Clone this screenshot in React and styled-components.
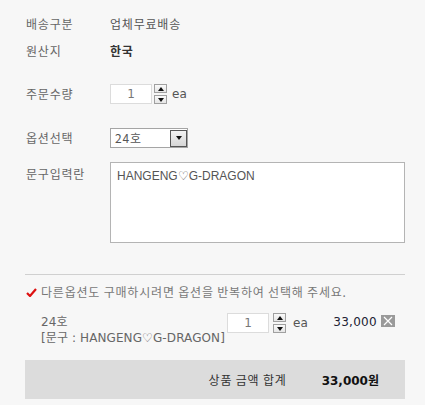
import styled, { createGlobalStyle } from "styled-components";

const GlobalStyle = createGlobalStyle`
  body {
    margin: 0;
    background: #f7f7f7;
    font-family: "Noto Sans CJK KR", "Noto Sans", sans-serif;
    font-size: 12px;
    letter-spacing: 0.8px;
    color: #666;
  }
`;

function QtyControl({ $gap = 2, $eaGap = 5 }) {
  return (
    <StyledQty>
      <StyledQtyInput readOnly value="1" />
      <StyledSpinner style={{ marginLeft: $gap }}>
        <StyledSpinButton aria-label="up">
          <StyledArrow $up />
        </StyledSpinButton>
        <StyledSpinButton aria-label="down">
          <StyledArrow />
        </StyledSpinButton>
      </StyledSpinner>
      <StyledUnit style={{ marginLeft: $eaGap }}>ea</StyledUnit>
    </StyledQty>
  );
}

function CheckIcon() {
  return (
    <StyledCheck width="11" height="9" viewBox="0 0 11 9">
      <path d="M1 5 L4 8 L10 1" fill="none" stroke="#d11" strokeWidth="2.2" />
    </StyledCheck>
  );
}

export default function App() {
  return (
    <>
      <GlobalStyle />
      <StyledPage>
        <StyledRow $height={27}>
          <StyledLabel>배송구분</StyledLabel>
          <StyledValue>업체무료배송</StyledValue>
        </StyledRow>
        <StyledRow $height={27}>
          <StyledLabel>원산지</StyledLabel>
          <StyledValue $bold>한국</StyledValue>
        </StyledRow>
        <StyledRow $top={20} $height={20}>
          <StyledLabel>주문수량</StyledLabel>
          <QtyControl />
        </StyledRow>
        <StyledRow $top={24} $height={20}>
          <StyledLabel>옵션선택</StyledLabel>
          <StyledSelect>
            <StyledSelectText>24호</StyledSelectText>
            <StyledSelectButton>
              <StyledArrow />
            </StyledSelectButton>
          </StyledSelect>
        </StyledRow>
        <StyledRow $top={14} $alignTop>
          <StyledLabel $pad>문구입력란</StyledLabel>
          <StyledTextArea readOnly value="HANGENG♡G-DRAGON" />
        </StyledRow>

        <StyledDivider />

        <StyledNotice>
          <CheckIcon />
          다른옵션도 구매하시려면 옵션을 반복하여 선택해 주세요.
        </StyledNotice>

        <StyledOptionRow>
          <StyledOptionName>
            24호
            <br />
            [문구 : HANGENG♡G-DRAGON]
          </StyledOptionName>
          <QtyControl $gap={4} $eaGap={7} />
          <StyledPrice>33,000</StyledPrice>
          <StyledRemove aria-label="remove">
            <svg width="10" height="10" viewBox="0 0 10 10">
              <path d="M1 1 L9 9 M9 1 L1 9" stroke="#fff" strokeWidth="1.2" />
            </svg>
          </StyledRemove>
        </StyledOptionRow>

        <StyledTotalBar>
          <StyledTotalLabel>상품 금액 합계</StyledTotalLabel>
          <StyledTotalValue>33,000원</StyledTotalValue>
        </StyledTotalBar>
      </StyledPage>
    </>
  );
}

const StyledPage = styled.main`
  width: 380px;
  padding: 10px 20px 6px 25px;
`;

const StyledRow = styled.div`
  display: flex;
  align-items: ${({ $alignTop }) => ($alignTop ? "flex-start" : "center")};
  margin-top: ${({ $top = 0 }) => $top}px;
  height: ${({ $height }) => ($height ? `${$height}px` : "auto")};
`;

const StyledLabel = styled.div`
  width: 84px;
  padding-left: 1px;
  padding-top: ${({ $pad }) => ($pad ? "3px" : "0")};
  line-height: 18px;
  color: #666;
`;

const StyledValue = styled.div`
  line-height: 18px;
  color: ${({ $bold }) => ($bold ? "#333" : "#555")};
  font-weight: ${({ $bold }) => ($bold ? 700 : 400)};
`;

const StyledQty = styled.div`
  display: flex;
  align-items: center;
`;

const StyledQtyInput = styled.input`
  box-sizing: border-box;
  width: 42px;
  height: 20px;
  border: 1px solid #dcdcdc;
  background: #fff;
  padding: 0;
  text-align: center;
  font-family: "DejaVu Sans", sans-serif;
  font-size: 12px;
  letter-spacing: 0;
  color: #777;
  outline: none;
`;

const StyledSpinner = styled.div`
  display: flex;
  flex-direction: column;
  gap: 2px;
`;

const StyledSpinButton = styled.button`
  box-sizing: border-box;
  width: 13px;
  height: 9px;
  padding: 0;
  border: 1px solid #a0a0a0;
  background: linear-gradient(#fafafa, #e6e6e6);
  display: flex;
  align-items: center;
  justify-content: center;
`;

const StyledArrow = styled.span`
  width: 0;
  height: 0;
  border-left: 3.5px solid transparent;
  border-right: 3.5px solid transparent;
  ${({ $up }) =>
    $up ? "border-bottom: 4px solid #111;" : "border-top: 4px solid #111;"}
`;

const StyledUnit = styled.span`
  font-family: "DejaVu Sans", sans-serif;
  font-size: 12px;
  letter-spacing: 0;
  color: #555;
  line-height: 20px;
`;

const StyledSelect = styled.div`
  box-sizing: border-box;
  width: 78px;
  height: 20px;
  border: 1px solid #a5a5a5;
  background: #fff;
  display: flex;
  align-items: center;
  justify-content: space-between;
`;

const StyledSelectText = styled.span`
  padding-left: 4px;
  color: #555;
  line-height: 18px;
`;

const StyledSelectButton = styled.span`
  box-sizing: border-box;
  width: 17px;
  height: 17px;
  border: 1px solid #555;
  background: linear-gradient(#f2f2f2, #d6d6d6);
  display: flex;
  align-items: center;
  justify-content: center;
`;

const StyledTextArea = styled.textarea`
  box-sizing: border-box;
  width: 295px;
  height: 81px;
  margin: 0;
  padding: 5px 6px;
  border: 1px solid #b4b4b4;
  background: #fff;
  resize: none;
  font-family: "Liberation Sans", sans-serif;
  font-size: 12px;
  letter-spacing: 0;
  line-height: 16px;
  color: #555;
  outline: none;
`;

const StyledDivider = styled.hr`
  margin: 31px 0 0;
  border: none;
  border-top: 1px solid #d0d0d0;
`;

const StyledNotice = styled.p`
  display: flex;
  align-items: center;
  margin: 8px 0 0 1px;
  line-height: 18px;
  color: #777;
`;

const StyledCheck = styled.svg`
  margin-right: 4px;
`;

const StyledOptionRow = styled.div`
  display: flex;
  align-items: flex-start;
  margin-top: 12px;
  padding: 0 10px 0 16px;
`;

const StyledOptionName = styled.div`
  width: 186px;
  padding-top: 1px;
  font-family: "DejaVu Sans", "Noto Sans CJK KR", sans-serif;
  font-size: 12px;
  letter-spacing: 0.1px;
  line-height: 16px;
  color: #666;
`;

const StyledPrice = styled.span`
  margin-left: auto;
  font-family: "DejaVu Sans", sans-serif;
  font-size: 12px;
  letter-spacing: 0.3px;
  line-height: 16px;
  padding-top: 1px;
  color: #223;
`;

const StyledRemove = styled.button`
  box-sizing: border-box;
  width: 14px;
  height: 12px;
  margin: 2px 0 0 4px;
  padding: 0;
  border: none;
  background: #9a9a9a;
  display: flex;
  align-items: center;
  justify-content: center;
`;

const StyledTotalBar = styled.div`
  display: flex;
  justify-content: flex-end;
  align-items: center;
  gap: 35px;
  height: 39px;
  margin-top: 14px;
  padding-right: 26px;
  background: #dcdcdc;
`;

const StyledTotalLabel = styled.span`
  color: #333;
`;

const StyledTotalValue = styled.span`
  font-family: "DejaVu Sans", "Noto Sans CJK KR", sans-serif;
  font-weight: 700;
  letter-spacing: 0;
  color: #111;
`;
